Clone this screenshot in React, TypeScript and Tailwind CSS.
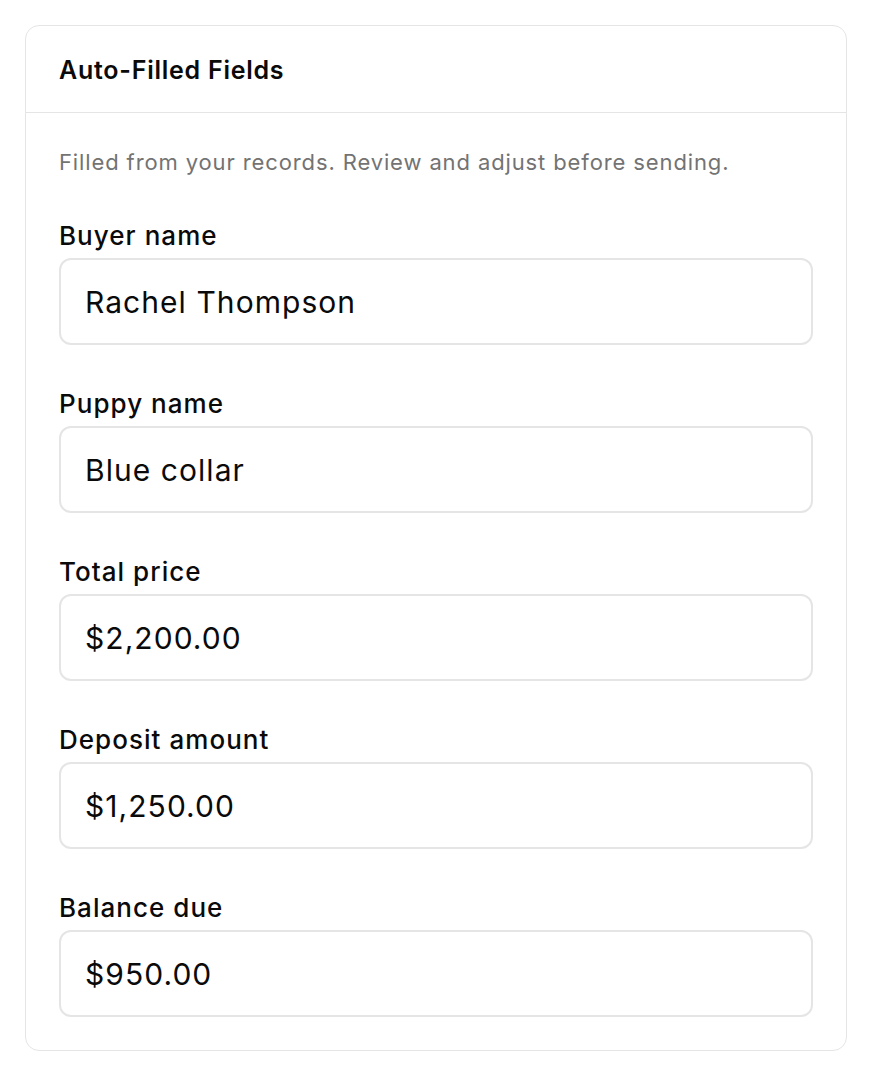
import React from 'react';

const fields = [
  { label: 'Buyer name', value: 'Rachel Thompson' },
  { label: 'Puppy name', value: 'Blue collar' },
  { label: 'Total price', value: '$2,200.00' },
  { label: 'Deposit amount', value: '$1,250.00' },
  { label: 'Balance due', value: '$950.00' },
];

const App = () => {
  return (
    <div className="min-h-screen bg-white p-[25px] font-['Inter',sans-serif] text-[#0a0a0a]">
      <div className="rounded-[14px] border border-[#e5e5e5] bg-white">
        {/* Header */}
        <div className="flex h-[87px] items-center border-b border-[#e5e5e5] px-[33px] pt-[2px]">
          <h2 className="text-[25px] font-semibold leading-8 tracking-[0.03em]">Auto-Filled Fields</h2>
        </div>

        {/* Body */}
        <div className="flex flex-col gap-[43px] px-[33px] pt-[33px] pb-[33px]">
          <p className="-mb-px text-[22px] leading-8 tracking-[0.04em] text-[#737373]">
            Filled from your records. Review and adjust before sending.
          </p>
          {fields.map((f) => (
            <div key={f.label} className="flex flex-col gap-[6px]">
              <label className="text-[26px] font-medium leading-8 tracking-[0.04em]">{f.label}</label>
              <input
                readOnly
                value={f.value}
                className="h-[87px] w-full rounded-[12px] border-2 border-[#e5e5e5] bg-white px-6 text-[30px] tracking-[0.035em] text-[#0a0a0a] outline-none"
              />
            </div>
          ))}
        </div>
      </div>
    </div>
  );
};

export default App;
